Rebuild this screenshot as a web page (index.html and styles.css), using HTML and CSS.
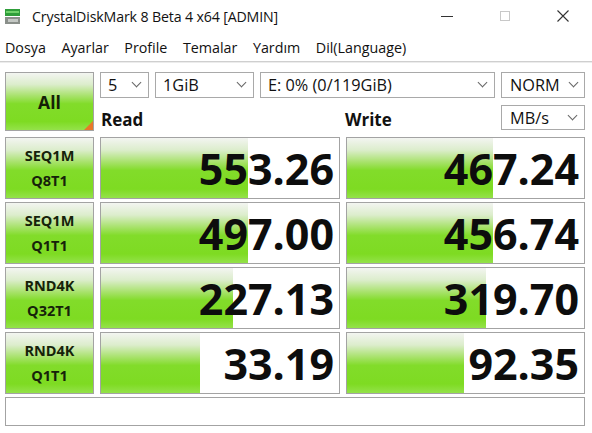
FILE: index.html
```html
<!DOCTYPE html>
<html>
<head>
<meta charset="utf-8">
<link rel="stylesheet" href="styles.css">
</head>
<body>
<div class="window">
  <div class="titlebar">
    <svg class="appicon" width="15" height="15" viewBox="0 0 15 15">
      <rect x="0" y="0" width="15" height="7" fill="#2f9e3a"/>
      <rect x="1" y="2" width="13" height="2" fill="#6fd26a"/>
      <rect x="0" y="8" width="15" height="7" fill="#8a8f8a"/>
      <rect x="3" y="10" width="10" height="3" fill="#c4c8c4"/>
    </svg>
    <span class="title">CrystalDiskMark 8 Beta 4 x64 [ADMIN]</span>
    <div class="controls">
      <span class="ctl"><svg width="12" height="12" viewBox="0 0 12 12"><line x1="0" y1="6.5" x2="12" y2="6.5" stroke="#333" stroke-width="1"/></svg></span>
      <span class="ctl"><svg width="12" height="12" viewBox="0 0 12 12"><rect x="1.5" y="1.5" width="9" height="9" fill="none" stroke="#c8c8c8" stroke-width="1"/></svg></span>
      <span class="ctl"><svg width="12" height="12" viewBox="0 0 12 12"><path d="M0.5 0.5 L11.5 11.5 M11.5 0.5 L0.5 11.5" stroke="#333" stroke-width="1.1"/></svg></span>
    </div>
  </div>
  <div class="menubar">
    <span>Dosya</span><span>Ayarlar</span><span>Profile</span><span>Temalar</span><span>Yardım</span><span>Dil(Language)</span>
  </div>
  <div class="main">
    <div class="top">
      <div class="allbtn">All<span class="corner"></span></div>
      <div class="topright">
        <div class="selrow">
          <div class="sel w-count"><span>5</span><i class="chev"></i></div>
          <div class="sel w-size"><span>1GiB</span><i class="chev"></i></div>
          <div class="sel w-drive"><span>E: 0% (0/119GiB)</span><i class="chev"></i></div>
          <div class="sel w-mode"><span>NORM</span><i class="chev"></i></div>
        </div>
        <div class="headrow">
          <div class="head h-read">Read</div>
          <div class="head h-write">Write</div>
          <div class="sel w-unit"><span>MB/s</span><i class="chev"></i></div>
        </div>
      </div>
    </div>
    <div class="rows">
      <div class="row">
        <div class="label"><span>SEQ1M</span><span>Q8T1</span></div>
        <div class="cell" style="background-size:147px 100%">553.26</div>
        <div class="cell" style="background-size:146px 100%">467.24</div>
      </div>
      <div class="row">
        <div class="label"><span>SEQ1M</span><span>Q1T1</span></div>
        <div class="cell" style="background-size:147px 100%">497.00</div>
        <div class="cell" style="background-size:146px 100%">456.74</div>
      </div>
      <div class="row">
        <div class="label"><span>RND4K</span><span>Q32T1</span></div>
        <div class="cell" style="background-size:132px 100%">227.13</div>
        <div class="cell" style="background-size:139px 100%">319.70</div>
      </div>
      <div class="row">
        <div class="label"><span>RND4K</span><span>Q1T1</span></div>
        <div class="cell" style="background-size:99px 100%">33.19</div>
        <div class="cell" style="background-size:117px 100%">92.35</div>
      </div>
    </div>
    <div class="status"></div>
  </div>
</div>
</body>
</html>
```
FILE: styles.css
```css
* { box-sizing: border-box; }
html, body { margin: 0; padding: 0; background: #fff; }
body { width: 592px; height: 433px; overflow: hidden; font-family: "Open Sans", "Noto Sans", sans-serif; color: #111; }
.window { width: 592px; height: 433px; background: #fff; }

.titlebar { height: 32px; display: flex; align-items: center; padding-left: 5px; }
.appicon { flex: none; margin-top: 1px; }
.title { margin-left: 12px; font-size: 14.2px; color: #111; letter-spacing: -0.15px; }
.controls { margin-left: auto; display: flex; height: 32px; }
.ctl { width: 58px; display: flex; align-items: center; justify-content: center; }

.menubar { height: 30px; display: flex; align-items: center; padding-left: 5px; padding-top: 2px; font-size: 14.3px; border-bottom: 1px solid #cfcfcf; box-shadow: 0 1px 0 #ececec; }
.menubar span { margin-right: 15.5px; }

.main { padding: 10px 7px 0 5px; }
.top { display: flex; gap: 6px; height: 59px; }
.allbtn { position: relative; width: 89px; height: 59px; border: 1px solid #a3a3a3; display: flex; align-items: center; justify-content: center; font-weight: 700; font-size: 17.5px; color: #142006; background: linear-gradient(to bottom, #f3f5f1 0%, #dcedcc 20%, #a8e26c 40%, #82dc2a 54%, #7edb22 85%, #94e24a 100%); }
.corner { position: absolute; right: 0; bottom: 0; width: 0; height: 0; border-style: solid; border-width: 0 0 9px 9px; border-color: transparent transparent #e8782a transparent; }

.topright { flex: 1; display: flex; flex-direction: column; }
.selrow { display: flex; gap: 6px; height: 26px; }
.sel { height: 26px; border: 1px solid #a9a9a9; background: #fff; display: flex; align-items: center; padding-left: 7px; padding-right: 8px; font-size: 16.3px; color: #111; }
.sel span { flex: 1; white-space: nowrap; }
.chev { width: 7px; height: 7px; border-right: 1.2px solid #666; border-bottom: 1.2px solid #666; transform: rotate(45deg); margin-top: -5px; flex: none; }
.w-count { width: 49px; }
.w-size { width: 99px; }
.w-drive { width: 235px; }
.w-mode { width: 84px; padding-left: 8px; padding-right: 7px; }
.w-unit { width: 84px; height: 25px; padding-left: 8px; }

.headrow { display: flex; margin-top: 7px; height: 25px; align-items: center; }
.head { font-weight: 700; font-size: 17px; color: #111; padding-top: 3px; }
.h-read { width: 245px; padding-left: 1px; }
.h-write { width: 156px; }

.rows { margin-top: 6px; display: flex; flex-direction: column; gap: 6px; }
.row { display: grid; grid-template-columns: 89px 240px 239px; column-gap: 6px; height: 59px; }
.label { border: 1px solid #a3a3a3; display: flex; flex-direction: column; align-items: center; justify-content: center; gap: 6px; font-weight: 700; font-size: 14.5px; line-height: 19px; color: #16220a; background: linear-gradient(to bottom, #f3f5f1 0%, #dcedcc 20%, #a8e26c 40%, #82dc2a 54%, #7edb22 85%, #94e24a 100%); }
.cell { border: 1px solid #a3a3a3; background-color: #fff; background-repeat: no-repeat; background-image: linear-gradient(to bottom, #f3f5f1 0%, #dcedcc 20%, #a8e26c 40%, #82dc2a 54%, #7edb22 85%, #94e24a 100%); display: flex; align-items: center; justify-content: flex-end; padding-right: 5px; padding-top: 1px; font-weight: 700; font-size: 43px; color: #0d0d0d; }

.status { margin-top: 6px; height: 29px; border: 1px solid #a3a3a3; background: #fff; width: 580px; }
```
